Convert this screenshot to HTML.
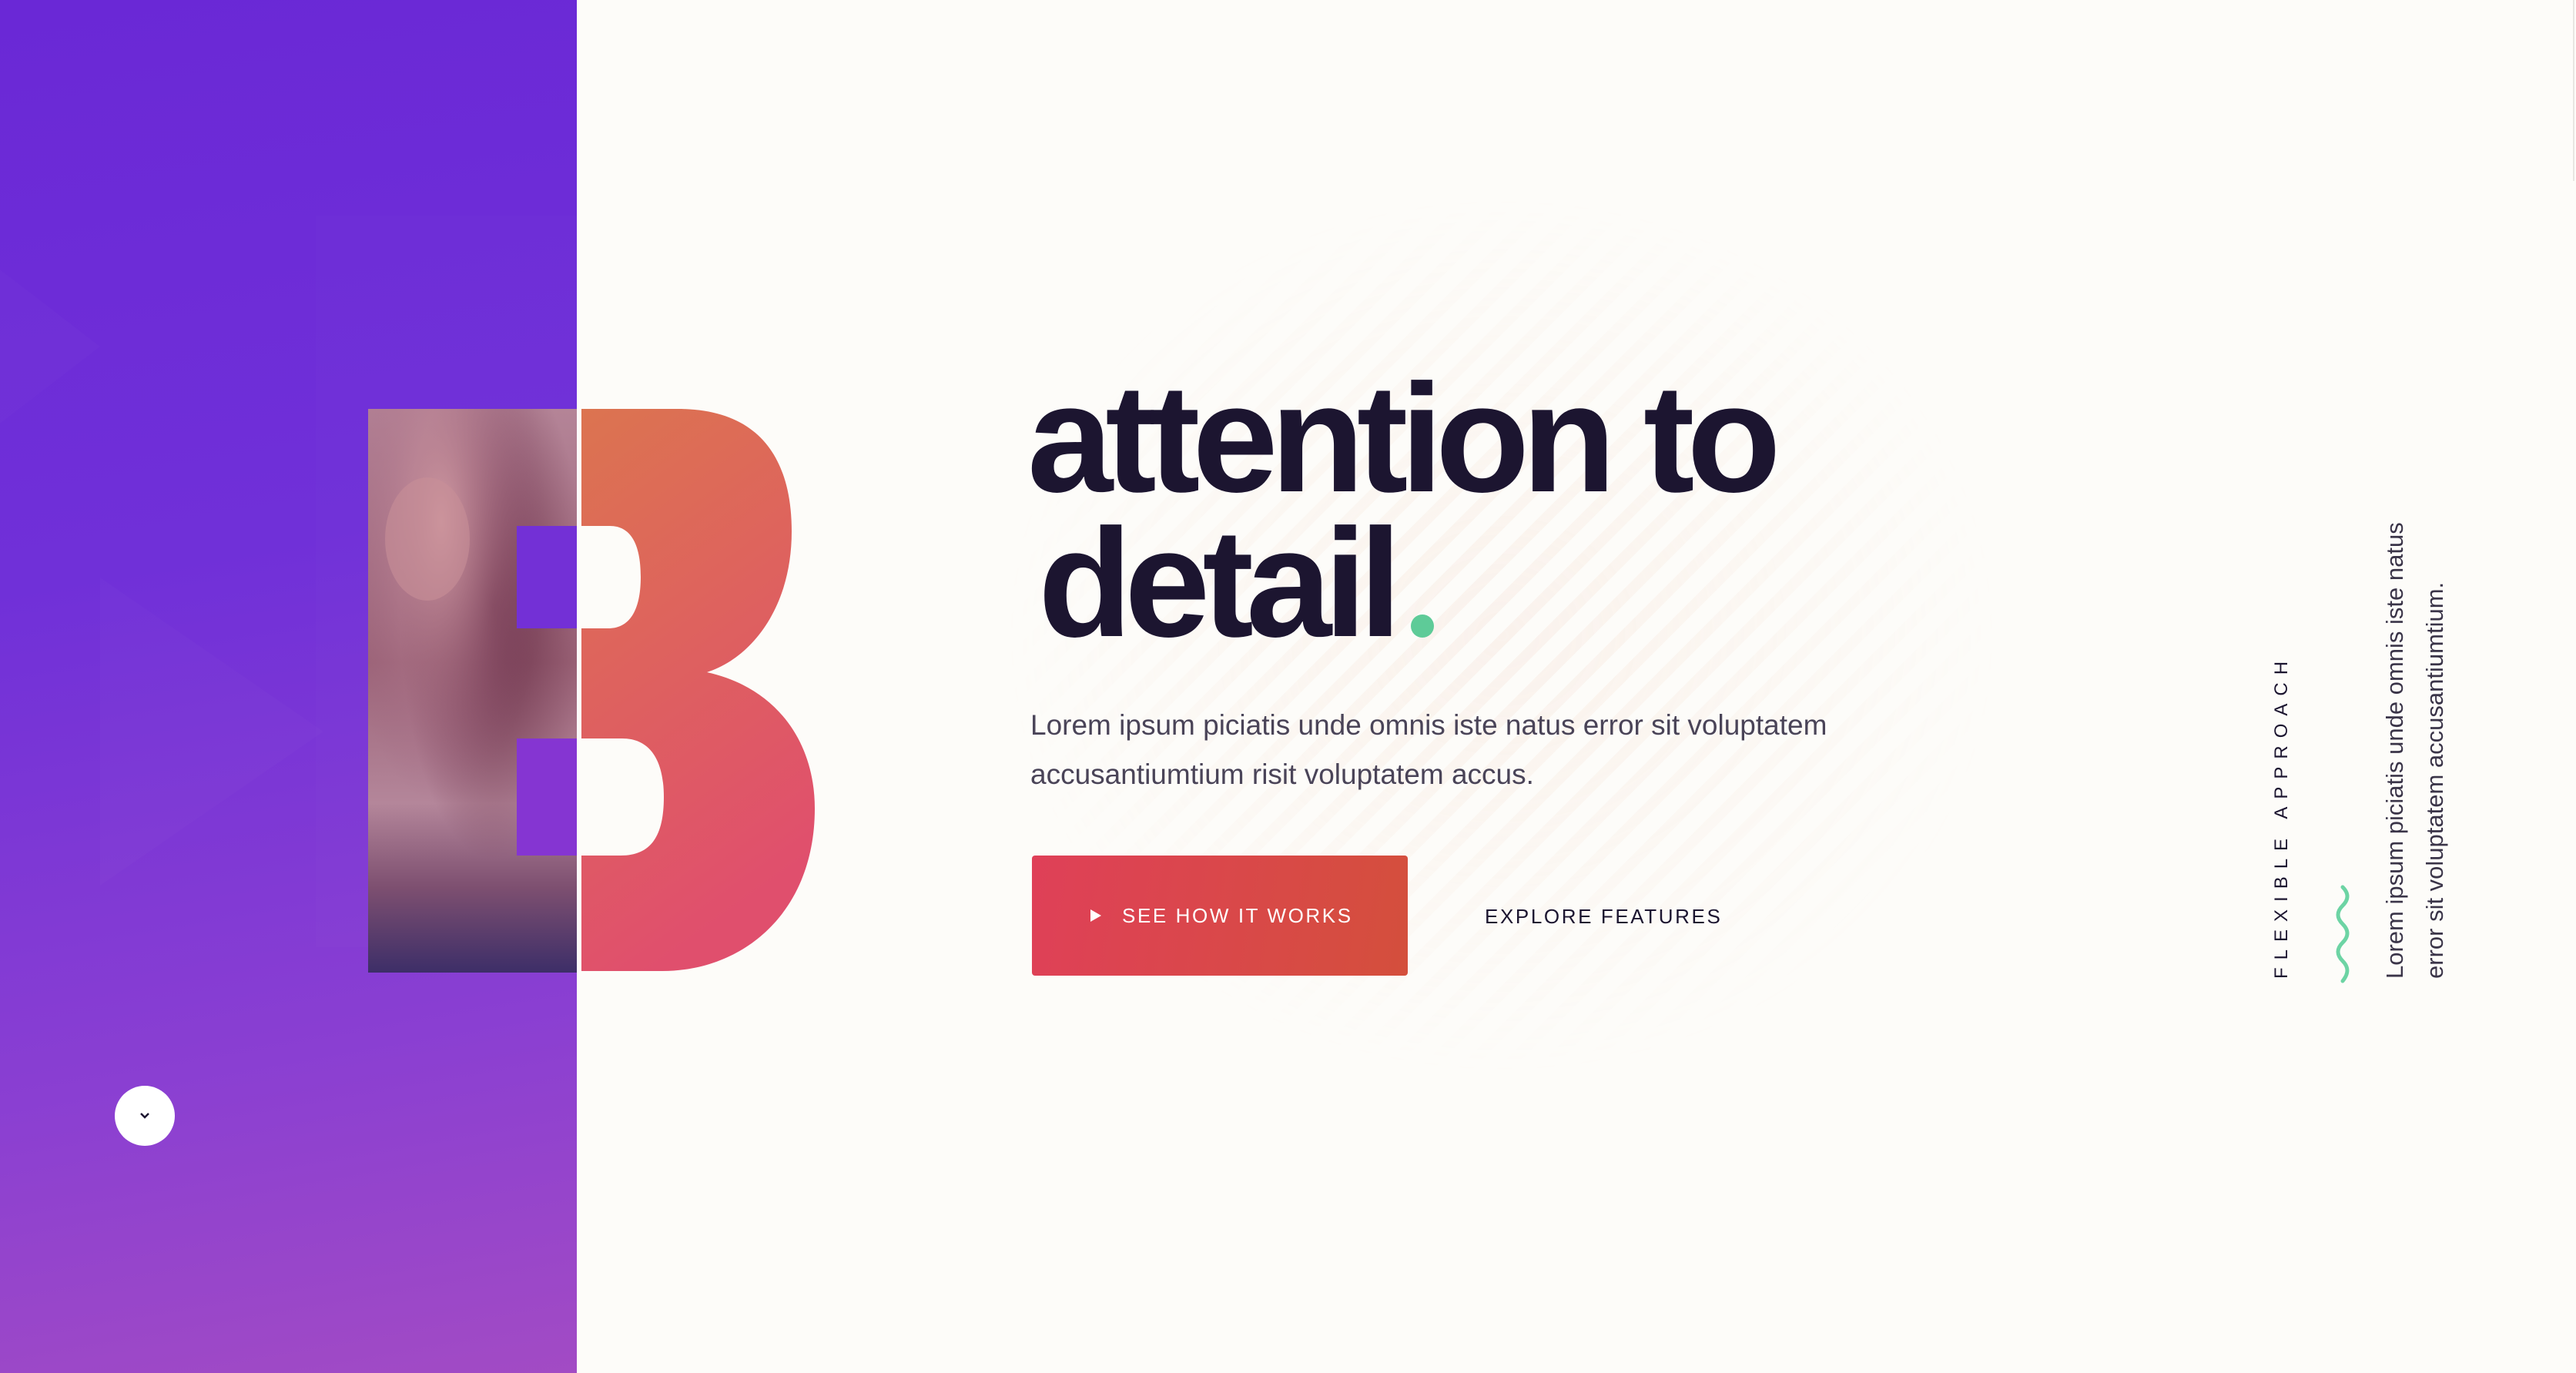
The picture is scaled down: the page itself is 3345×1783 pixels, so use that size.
<!DOCTYPE html>
<html><head><meta charset="utf-8"><style>
*{margin:0;padding:0;box-sizing:border-box}
body{width:3345px;height:1783px;overflow:hidden;background:#fdfcf9;position:relative;font-family:"Liberation Sans",sans-serif}
.purple{position:absolute;left:0;top:0;width:749px;height:1783px;background:linear-gradient(170deg,#6a28d6 0%,#7030d8 40%,#8a3fd2 75%,#a24bc4 100%)}
.stripes{position:absolute;left:1300px;top:250px;width:1300px;height:1150px;background:repeating-linear-gradient(135deg,rgba(240,200,180,0.18) 0 14px,transparent 14px 36px);-webkit-mask-image:radial-gradient(ellipse at center,#000 0%,transparent 70%);mask-image:radial-gradient(ellipse at center,#000 0%,transparent 70%)}
h1{position:absolute;left:1334px;font-weight:bold;color:#1c1530;font-size:200px;letter-spacing:-10px;line-height:1;white-space:nowrap}
.p{position:absolute;left:1338px;top:910px;font-size:37px;line-height:64px;color:#4a4458;width:1300px}
.btn{position:absolute;left:1340px;top:1111px;width:488px;height:156px;border-radius:4px;background:linear-gradient(100deg,#df4058,#d44f3c);color:#fff;font-size:26px;letter-spacing:2.6px;line-height:156px;padding-left:117px}
.btn:before{content:"";position:absolute;left:76px;top:70px;border-left:14px solid #fff;border-top:8px solid transparent;border-bottom:8px solid transparent}
.ex{position:absolute;left:1928px;top:1175px;font-size:26px;letter-spacing:2.6px;color:#1c1530}
.v{position:absolute;writing-mode:vertical-rl;transform:rotate(180deg);white-space:nowrap}
</style></head><body>
<div class="purple"></div>
<svg style="position:absolute;left:0;top:0" width="749" height="1783"><polygon points="130,750 420,950 130,1150" fill="rgba(255,255,255,0.015)"/><polygon points="0,350 130,450 0,550" fill="rgba(255,255,255,0.015)"/><rect x="410" y="280" width="339" height="950" fill="rgba(255,255,255,0.012)"/></svg>
<div class="stripes"></div>
<svg style="position:absolute;left:0;top:0" width="1100" height="1300">
<defs>
<linearGradient id="bg" x1="0" y1="0" x2="0.3" y2="1"><stop offset="0" stop-color="#dc7450"/><stop offset="1" stop-color="#e04f6d"/></linearGradient>
<radialGradient id="face" cx="0.35" cy="0.2" r="0.5"><stop offset="0" stop-color="#d09aa2"/><stop offset="1" stop-color="#9a5e7c" stop-opacity="0"/></radialGradient>
<radialGradient id="hair" cx="0.6" cy="0.35" r="0.45"><stop offset="0" stop-color="#6a3048"/><stop offset="1" stop-color="#6a3048" stop-opacity="0"/></radialGradient>
<linearGradient id="ph" x1="0" y1="0" x2="0" y2="1"><stop offset="0" stop-color="#b48497"/><stop offset="0.45" stop-color="#9c6478"/><stop offset="0.7" stop-color="#b4869a"/><stop offset="0.85" stop-color="#7d4f70"/><stop offset="1" stop-color="#3d2e68"/></linearGradient>
</defs>
<rect x="478" y="531" width="271" height="732" fill="url(#ph)"/>
<rect x="478" y="531" width="271" height="732" fill="url(#hair)"/>
<rect x="478" y="531" width="271" height="732" fill="url(#face)"/>
<ellipse cx="555" cy="700" rx="55" ry="80" fill="#c88f98" opacity="0.6"/>
<rect x="671" y="683" width="78" height="133" fill="#7330d6"/>
<rect x="671" y="959" width="78" height="152" fill="#8535d2"/>
<path fill-rule="evenodd" fill="url(#bg)" d="M755,531 L880,531 C990,531 1028,600 1028,690 C1028,790 975,855 918,873 C1005,892 1058,960 1058,1050 C1058,1185 965,1261 860,1261 L755,1261 Z M755,683 L792,683 C818,683 832,705 832,749 C832,795 816,816 790,816 L755,816 Z M755,959 L808,959 C846,959 862,990 862,1035 C862,1085 846,1111 806,1111 L755,1111 Z"/>
</svg>
<h1 style="top:470px">attention to</h1>
<h1 style="top:658px;left:1348px">detail</h1>
<div style="position:absolute;left:1832px;top:798px;width:30px;height:30px;border-radius:50%;background:#5ecb98"></div>
<div class="p">Lorem ipsum piciatis unde omnis iste natus error sit voluptatem<br>accusantiumtium risit voluptatem accus.</div>
<div class="btn">SEE HOW IT WORKS</div>
<div class="ex">EXPLORE FEATURES</div>
<div style="position:absolute;left:149px;top:1410px;width:78px;height:78px;border-radius:50%;background:#fff"></div>
<svg style="position:absolute;left:180px;top:1442px" width="16" height="14"><path d="M3,4 L8,9 L13,4" stroke="#1c1530" stroke-width="2.5" fill="none"/></svg>
<div class="v" style="left:2948px;top:864px;height:407px;font-size:24px;letter-spacing:10px;color:#1c1530;line-height:30px">FLEXIBLE APPROACH</div>
<svg style="position:absolute;left:3028px;top:1148px" width="30" height="132"><path d="M14,4 C22,12 22,20 14,28 C6,36 6,44 14,52 C22,60 22,68 14,76 C6,84 6,92 14,100 C22,108 22,116 14,126" stroke="#6dd4a4" stroke-width="5" fill="none" stroke-linecap="round"/></svg>
<div class="v" style="left:3084px;top:660px;height:611px;font-size:31px;line-height:52px;color:#3a3448">Lorem ipsum piciatis unde omnis iste natus<br>error sit voluptatem accusantiumtium.</div>
<div style="position:absolute;left:3341px;top:0;width:2px;height:235px;background:#e8e6e2"></div>
</body></html>
